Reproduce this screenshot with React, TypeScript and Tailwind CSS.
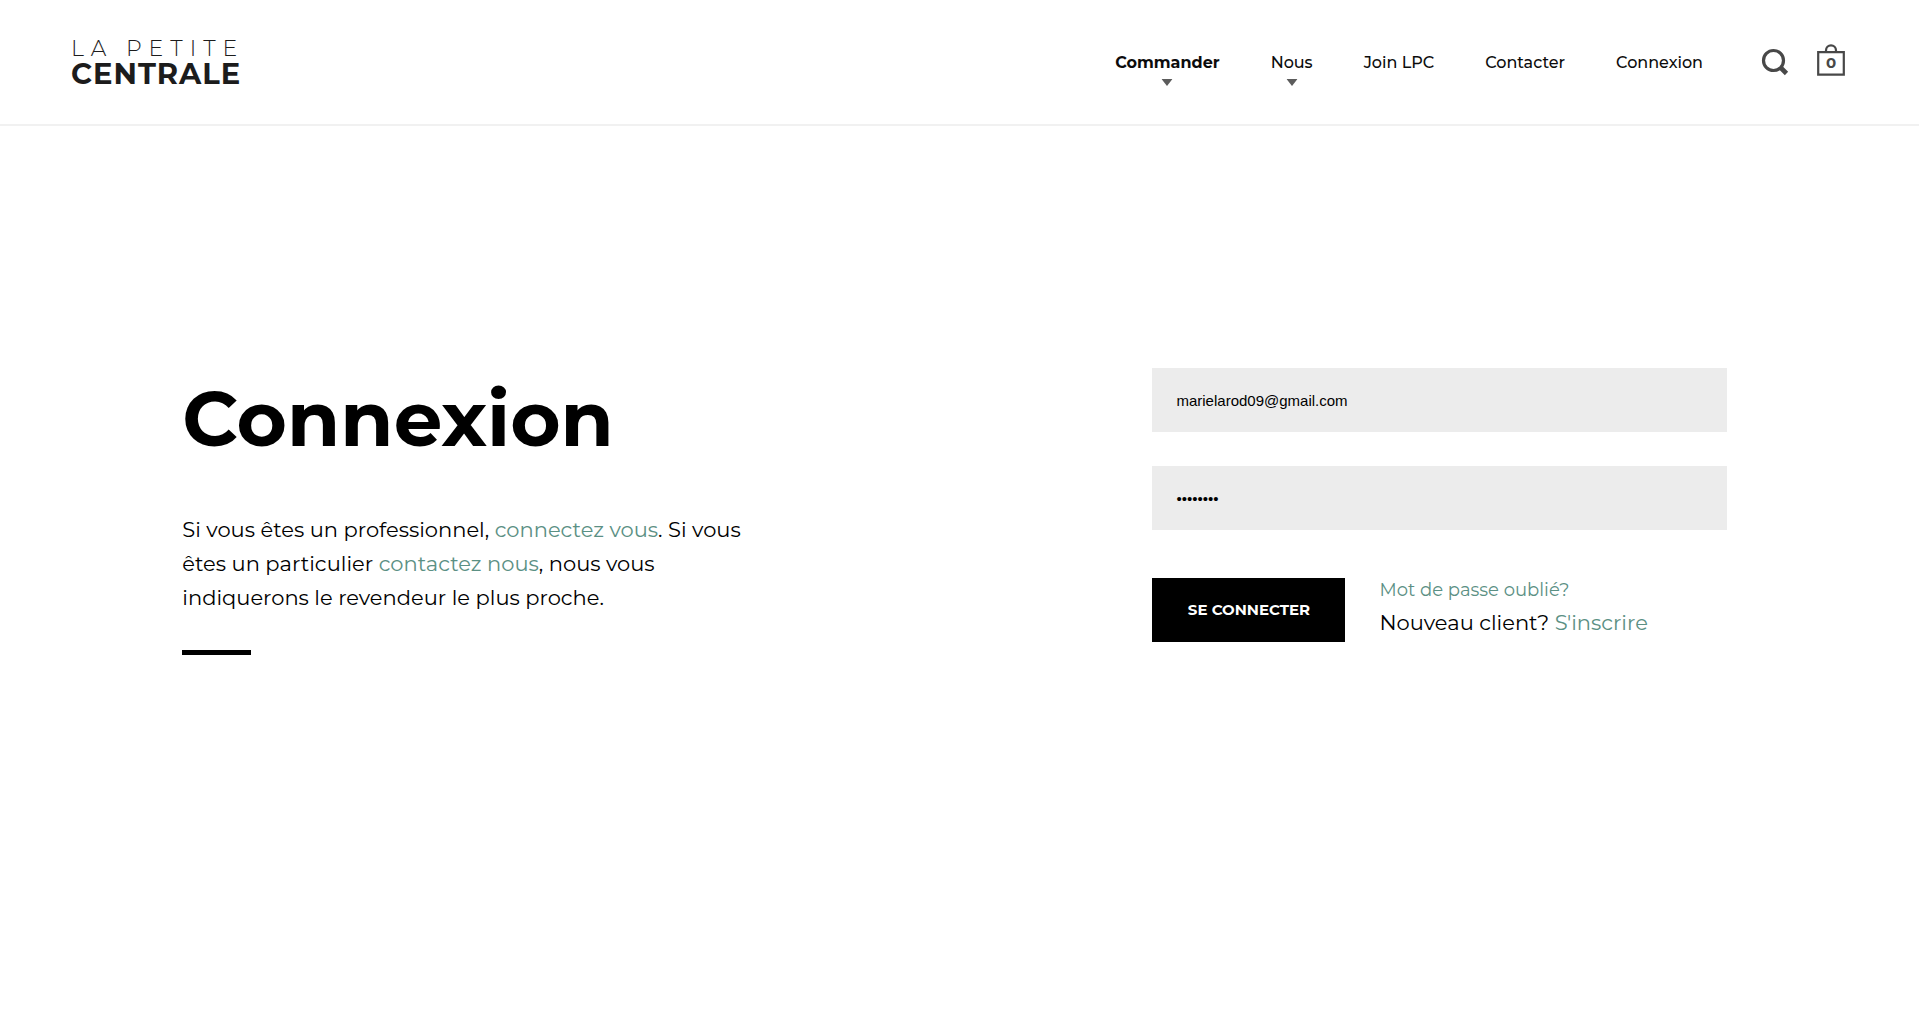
import React from "react";

type NavItem = { label: string; bold?: boolean; menu?: boolean };

const navItems: NavItem[] = [
  { label: "Commander", bold: true, menu: true },
  { label: "Nous", menu: true },
  { label: "Join LPC" },
  { label: "Contacter" },
  { label: "Connexion" },
];

function Logo() {
  return (
    <a href="#" className="flex flex-col text-[#1c1c1c]">
      <span className="text-[22px] leading-6 font-light tracking-[7px]">LA PETITE</span>
      <span className="text-[29px] leading-[26px] font-bold tracking-[1px]">CENTRALE</span>
    </a>
  );
}

function NavLink({ label, bold, menu }: NavItem) {
  return (
    <li className="relative">
      <a href="#" className={bold ? "font-bold" : "font-medium"}>
        {label}
      </a>
      {menu && (
        <svg
          className="absolute top-full left-1/2 mt-1 -translate-x-1/2"
          width="11"
          height="7"
          viewBox="0 0 11 7"
          aria-hidden="true"
        >
          <path d="M0 0h11L5.5 7z" fill="#5c5c5c" />
        </svg>
      )}
    </li>
  );
}

function SearchIcon() {
  return (
    <svg width="28" height="28" viewBox="0 0 28 28" fill="none" stroke="#484848" aria-hidden="true">
      <circle cx="12.5" cy="12.5" r="10" strokeWidth="3.2" />
      <path d="M19.5 19.5l6 6" strokeWidth="4.6" />
    </svg>
  );
}

function BagIcon() {
  return (
    <svg width="28" height="32" viewBox="0 0 28 32" fill="none" stroke="#484848" aria-hidden="true">
      <path d="M1.2 8.2h25.6v22.4H1.2z" strokeWidth="2.2" />
      <path d="M9 8V6.4a5 5 0 0 1 10 0V8" strokeWidth="2.2" />
    </svg>
  );
}

export default function App() {
  return (
    <div className="min-h-screen bg-white font-['Montserrat','Inter',sans-serif] text-black">
      <header className="flex h-[126px] items-center justify-between border-b-2 border-[#f1f1f1] pr-[74px] pl-[71px]">
        <Logo />
        <div className="flex items-center">
          <nav>
            <ul className="flex gap-[51px] pt-0.5 text-base leading-6 text-[#0c0c0c]">
              {navItems.map((item) => (
                <NavLink key={item.label} {...item} />
              ))}
            </ul>
          </nav>
          <div className="ml-[58px] flex items-center gap-7">
            <button type="button" aria-label="Rechercher">
              <SearchIcon />
            </button>
            <a href="#" aria-label="Panier" className="relative mb-1">
              <BagIcon />
              <span className="absolute inset-x-0 bottom-[3px] text-center text-[15px] leading-5 font-bold text-[#484848]">
                0
              </span>
            </a>
          </div>
        </div>
      </header>

      <main className="flex justify-between pt-[242px] pr-[10%] pl-[9.5%]">
        <section className="w-[37%] pt-1.5">
          <h1 className="text-[77px] leading-[88px] font-bold">Connexion</h1>
          <p className="mt-[51px] text-[21px] leading-[34px]">
            Si vous êtes un professionnel,{" "}
            <a href="#" className="text-[#5b9084]">connectez vous</a>. Si vous êtes un particulier{" "}
            <a href="#" className="text-[#5b9084]">contactez nous</a>, nous vous indiquerons le
            revendeur le plus proche.
          </p>
          <hr className="mt-[35px] h-[5px] w-[69px] border-0 bg-black" />
        </section>

        <form className="w-[37.2%]" onSubmit={(e) => e.preventDefault()}>
          <input
            type="email"
            aria-label="E-mail"
            defaultValue="marielarod09@gmail.com"
            className="block h-16 w-full bg-[#ececec] px-6 font-['Liberation_Sans',sans-serif] text-[15px] outline-none"
          />
          <input
            type="password"
            aria-label="Mot de passe"
            defaultValue="centrale"
            className="mt-[34px] block h-16 w-full bg-[#ececec] px-6 font-['Liberation_Sans',sans-serif] text-[15px] outline-none"
          />
          <div className="mt-12 flex items-start gap-[34px]">
            <button type="submit" className="h-16 w-[193px] bg-black text-[15px] font-bold text-white">
              SE CONNECTER
            </button>
            <div className="-mt-1">
              <a href="#" className="block text-lg leading-8 text-[#5b9084]">
                Mot de passe oublié?
              </a>
              <p className="text-[21px] leading-[34px]">
                Nouveau client? <a href="#" className="text-[#5b9084]">S'inscrire</a>
              </p>
            </div>
          </div>
        </form>
      </main>
    </div>
  );
}
